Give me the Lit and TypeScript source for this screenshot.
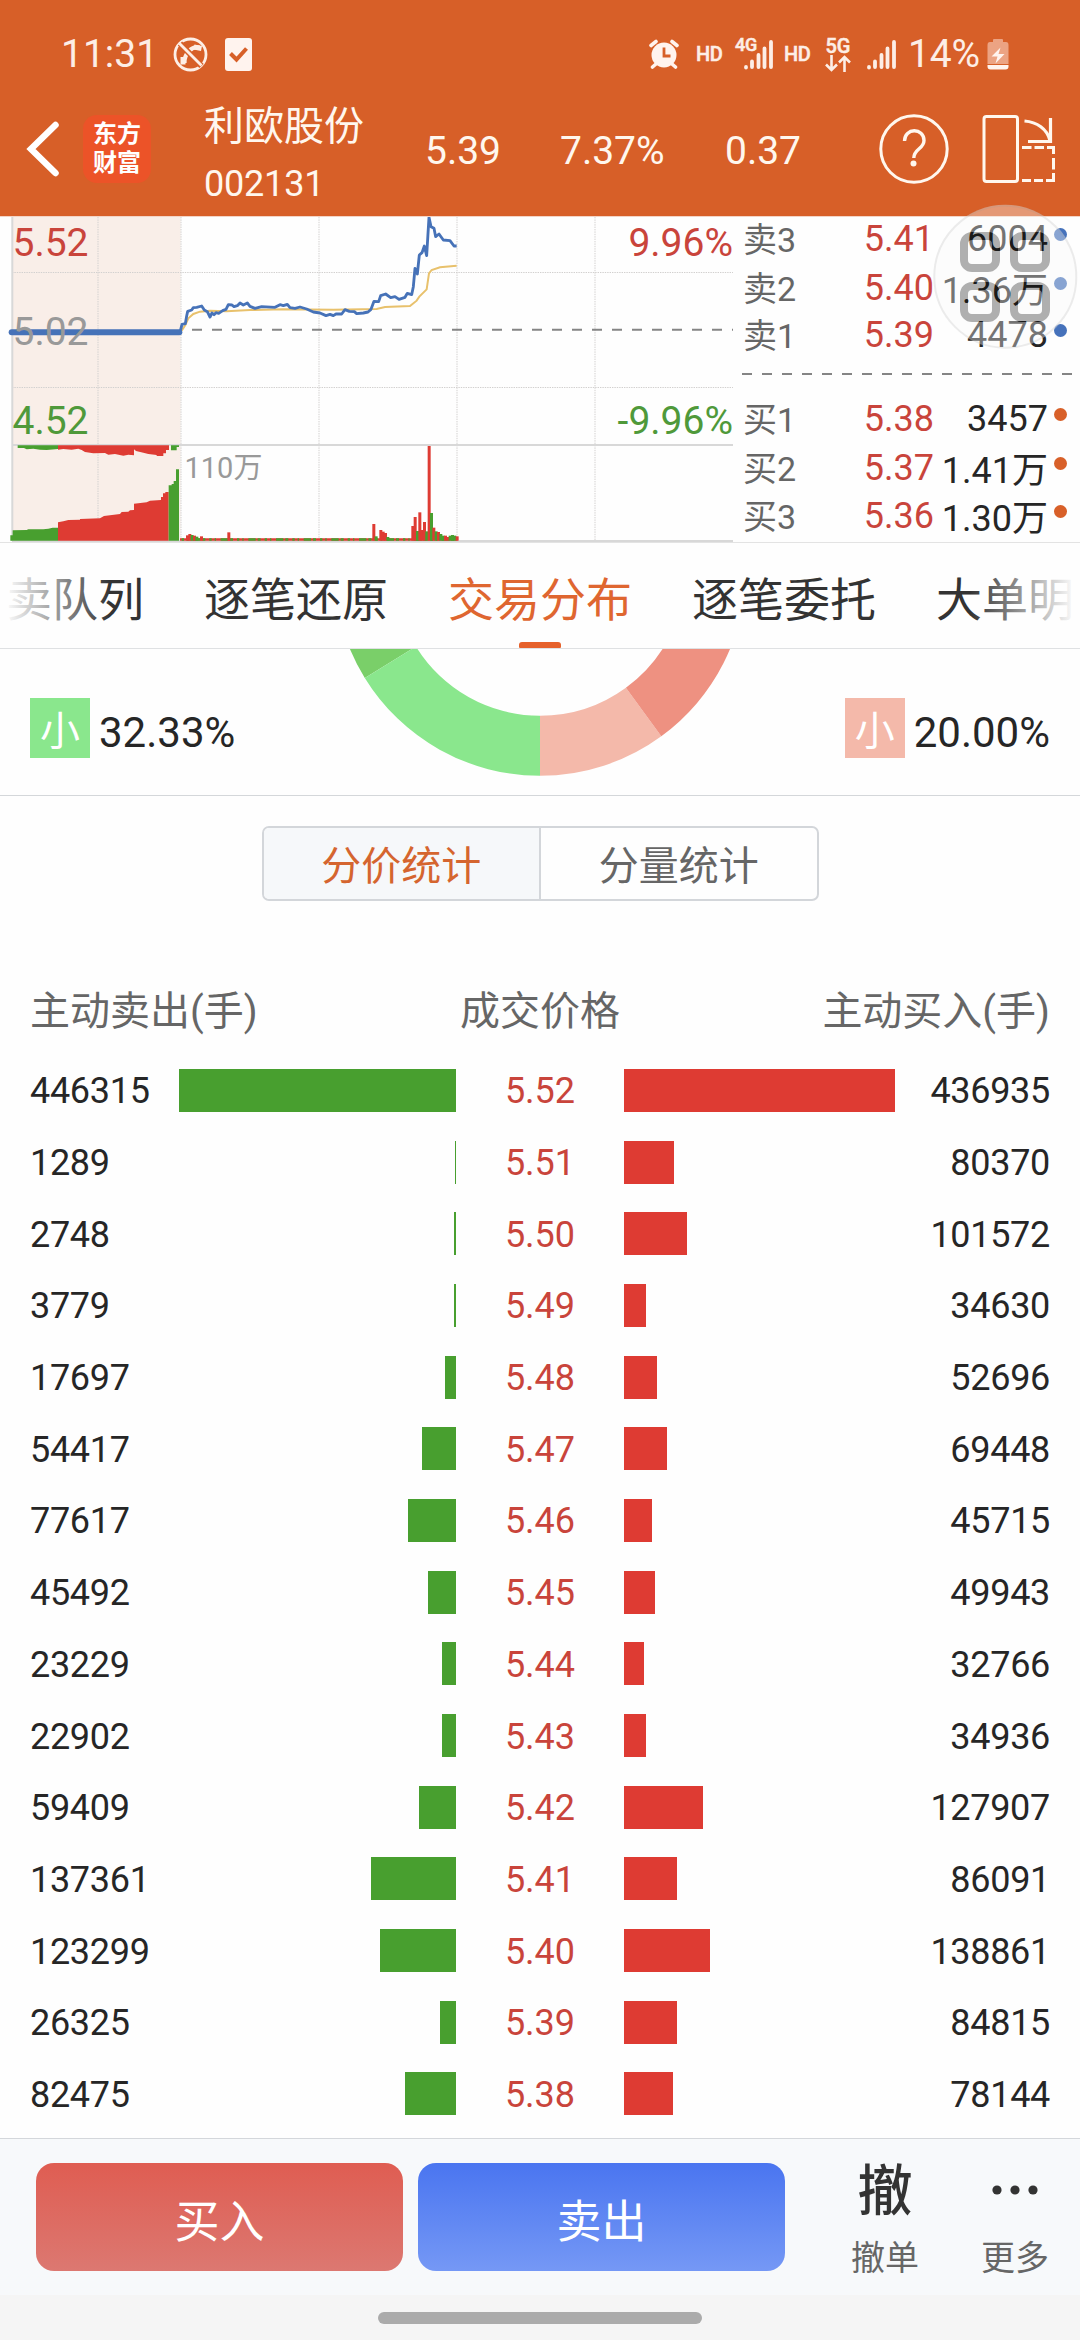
import { LitElement, html, svg, css } from "lit";
import { customElement } from "lit/decorators.js";
import { classMap } from "lit/directives/class-map.js";

type Level = { label: string; price: string; size: string; side: "ask" | "bid" };

const ASKS: Level[] = [
  { label: "卖3", price: "5.41", size: "6004", side: "ask" },
  { label: "卖2", price: "5.40", size: "1.36万", side: "ask" },
  { label: "卖1", price: "5.39", size: "4478", side: "ask" },
];
const BIDS: Level[] = [
  { label: "买1", price: "5.38", size: "3457", side: "bid" },
  { label: "买2", price: "5.37", size: "1.41万", side: "bid" },
  { label: "买3", price: "5.36", size: "1.30万", side: "bid" },
];
const TABS = ["买卖队列", "逐笔还原", "交易分布", "逐笔委托", "大单明细"];

// [active sell, price, active buy]
const ROWS: [number, string, number][] = [
  [446315, "5.52", 436935],
  [1289, "5.51", 80370],
  [2748, "5.50", 101572],
  [3779, "5.49", 34630],
  [17697, "5.48", 52696],
  [54417, "5.47", 69448],
  [77617, "5.46", 45715],
  [45492, "5.45", 49943],
  [23229, "5.44", 32766],
  [22902, "5.43", 34936],
  [59409, "5.42", 127907],
  [137361, "5.41", 86091],
  [123299, "5.40", 138861],
  [26325, "5.39", 84815],
  [82475, "5.38", 78144],
];
const MAX_VOLUME = 446315;
const MAX_BAR = 277;
const barWidth = (v: number) => Math.max(1, (v / MAX_VOLUME) * MAX_BAR).toFixed(1);

const PRICE_LINE =
  "540,367 546,343 556,341 560,318 563,304 575,300 580,293 590,292 605,288 613,300 622,305 630,321 636,309 642,314 648,308 656,310 668,302 678,298 685,284 696,285 702,290 712,287 720,279 730,285 742,279 750,289 765,295 785,290 825,292 840,284 850,287 862,283 870,293 885,295 900,291 920,297 940,306 960,309 978,317 990,313 1000,317 1008,312 1025,312 1035,299 1048,304 1063,305 1070,311 1090,309 1104,306 1113,298 1122,274 1136,275 1142,257 1157,252 1172,263 1185,260 1197,268 1215,262 1222,250 1235,254 1240,230 1245,175 1252,192 1258,135 1266,128 1273,108 1280,137 1287,22 1293,50 1302,55 1307,80 1317,72 1330,90 1350,92 1362,108 1370,108";
const AVERAGE_LINE =
  "545,362 556,345 565,325 580,312 600,305 630,302 680,304 750,300 850,298 1000,299 1130,297 1155,291 1230,288 1250,272 1258,260 1280,238 1287,190 1295,180 1320,172 1370,167";

// Volume spikes after the open: [x, top, rising]
const SPIKES: [number, number, boolean][] = [
  [558, 976, true], [565, 972, true], [572, 975, false], [579, 977, true], [586, 980, false],
  [600, 979, true], [682, 967, true], [1117, 942, true], [1124, 979, false], [1138, 960, true],
  [1145, 965, true], [1152, 969, true], [1159, 981, false], [1234, 948, true], [1241, 921, true],
  [1248, 963, false], [1255, 907, true], [1262, 960, true], [1269, 936, true], [1276, 964, false],
  [1283, 708, true], [1290, 909, false], [1297, 953, true], [1304, 964, false], [1311, 966, true],
  [1318, 972, false], [1325, 977, false], [1332, 977, true], [1339, 981, true], [1346, 977, false],
  [1353, 975, false], [1360, 977, false], [1367, 979, true],
];

@customElement("stock-chart")
export class StockChart extends LitElement {
  static styles = css`
    :host { display: block; flex: none; width: 736px; height: 325px; }
    svg { display: block; }
    text { font-family: Roboto, "Noto Sans CJK SC", sans-serif; font-size: 39px; }
    .up { fill: #c9443b; }
    .down { fill: #4f993a; }
    .flat { fill: #999; }
    .small { font-size: 29px; }
    .grid { stroke: #d2d0cf; stroke-width: 1; stroke-dasharray: 1.4 1; }
    .frame { stroke: #d8d8d8; stroke-width: 2; }
    .g { fill: #489f2f; }
    .r { fill: #de3b33; }
  `;
  render() {
    return html`<svg width="736" height="325" viewBox="0 217 736 325">
      <rect x="12" y="217" width="168.6" height="324" fill="#f9eee8"></rect>
      ${[98, 181, 319, 457, 595].map((x) => svg`<line class="grid" x1=${x} x2=${x} y1="217" y2="541"></line>`)}
      ${[272.5, 387.5].map((y) => svg`<line class="grid" x1="12" x2="733" y1=${y} y2=${y}></line>`)}
      <path class="frame" d="M12.3 217V541M12 445H733M12 541H733"></path>
      <path d="M192 329.8H733" stroke="#858585" stroke-width="2" stroke-dasharray="10 10"></path>
      <g transform="translate(0 210) scale(.33333)">
        <path class="g" d="M31 992V976H38V961L80 960 85 958H130L145 956 158 953H174V992Z"></path>
        <path class="r" d="M174 992V937L190 934 205 930 240 929V927L300 925 312 918 330 916 360 912 365 906 385 905 390 901 402 900V881L440 877 450 872 483 870V861H489V850H496V846H506V992Z"></path>
        <path class="g" d="M506 992V826H515V822H521V813H528V778H537V992Z"></path>
        <path class="g" d="M53 706H174V717L140 720 120 719 100 716 80 718 72 714H53Z"></path>
        <path class="r" d="M174 706H507V720H498V730H490V738H470V735L445 732 430 728 408 723 402 718V736L385 734 370 737 345 732 325 734 315 729 280 730 255 726 245 720 235 716 215 719 190 717 174 719Z"></path>
        <path class="g" d="M513 706H537V711H530V721H513Z"></path>
        <path d="M540 988.500H1373" stroke="#de3b33" stroke-width="8"></path>
        <path d="M545 988.500H1373" stroke="#489f2f" stroke-width="8" stroke-dasharray="7 9 4 14 22 6 9 12"></path>
        ${SPIKES.map(([x, y, up]) => svg`<rect class=${up ? "r" : "g"} x=${x} y=${y} width="9" height=${992 - y}></rect>`)}
        <polyline points=${AVERAGE_LINE} fill="none" stroke="#e8c16c" stroke-width="6"></polyline>
        <path d="M35 367H538" stroke="#4672b8" stroke-width="18" stroke-linecap="round"></path>
        <polyline points=${PRICE_LINE} fill="none" stroke="#4672b8" stroke-width="8.500" stroke-linejoin="round"></polyline>
      </g>
      <text class="up" x="12.500" y="256">5.52</text>
      <text class="flat" x="12.500" y="345">5.02</text>
      <text class="down" x="12.500" y="434">4.52</text>
      <text class="up" x="733" y="256" text-anchor="end">9.96%</text>
      <text class="down" x="733" y="434" text-anchor="end">-9.96%</text>
      <text class="flat small" x="184.500" y="478">110万</text>
    </svg>`;
  }
}

@customElement("order-book")
export class OrderBook extends LitElement {
  static styles = css`
    :host { display: block; flex: 1; min-width: 0; padding-left: 6px; font-size: 36px; }
    .row { display: grid; grid-template-columns: 62px 130px 1fr 13px; height: 48px; line-height: 48px; align-items: center; }
    .label { color: #666; font-size: 34px; padding: 2px 0 0 1px; }
    .price { color: #c9443b; text-align: right; }
    .size { color: #262626; text-align: right; padding-right: 6px; white-space: nowrap; }
    .size.wan { padding-top: 5px; }
    .dot { width: 13px; height: 13px; border-radius: 50%; background: #d86029; margin-top: -9px; }
    .dot.ask { background: #4672bb; }
    .book { padding: 0 13px 0 0; margin-top: -3.500px; }
    .sep { display: block; margin: 13.500px 0 16.500px; }
  `;
  private row(l: Level) {
    return html`<div class="row">
      <span class="label">${l.label}</span>
      <span class="price">${l.price}</span>
      <span class=${classMap({ size: true, wan: l.size.endsWith("万") })}>${l.size}</span>
      <i class=${classMap({ dot: true, ask: l.side === "ask" })}></i>
    </div>`;
  }
  render() {
    return html`<div class="book">
      ${ASKS.map((l) => this.row(l))}
      <svg class="sep" width="330" height="6"><path d="M0 3H330" stroke="#858585" stroke-width="2" stroke-dasharray="10 10"></path></svg>
      ${BIDS.map((l) => this.row(l))}
    </div>`;
  }
}

const signal = svg`<path d="M2 28V28.500M8 22.500V28M14.500 16V28M20.500 9.500V28M27 3V28" stroke="#fdeee6" stroke-width="3.800" stroke-linecap="round"/>`;

@customElement("app-root")
export class AppRoot extends LitElement {
  static styles = css`
    :host {
      display: block; position: relative; width: 1080px; height: 2340px; overflow: hidden;
      background: #fefefe; color: #262626;
      font-family: Roboto, "Noto Sans CJK SC", sans-serif;
    }
    svg { display: block; flex: none; }
    .header { height: 216px; background: #d75f28; border-bottom: 1px solid #f3d4c6; color: #fff7ee; }
    .status { display: flex; align-items: center; height: 108px; padding: 0 71px 0 61px; box-sizing: border-box; color: #fdeee6; font-size: 39px; line-height: 44px; }
    .time { width: 112px; }
    .task { margin-left: 17px; }
    .grow { flex: 1; }
    .hd, .net4 span, .net5 { -webkit-text-stroke: .5px #fdeee6; }
    .hd { font-size: 20px; font-weight: 500; line-height: 24px; letter-spacing: -.3px; width: 28px; }
    .hd.first { margin-left: 17px; }
    .net4 { display: grid; width: 38px; margin: 0 11px; }
    .net4 > * { grid-area: 1 / 1; }
    .net4 span { font-size: 18px; font-weight: 500; line-height: 18px; margin-top: -2px; }
    .net4 svg { justify-self: end; }
    .net5 { width: 26px; margin: 0 16px 0 13px; font-size: 20px; font-weight: 500; line-height: 18px; text-align: center; }
    .pct { margin: 0 7px 0 12px; letter-spacing: -.1px; }
    .title { display: flex; align-items: center; height: 108px; font-size: 39px; margin-top: -13px; }
    .back { margin-left: 26px; }
    .logo { width: 68px; height: 68px; margin-left: 24px; padding-top: 5px; box-sizing: border-box; border-radius: 14px; background: #ec5328; color: #fff; font-size: 24px; font-weight: 700; line-height: 29px; text-align: center; }
    .stock { width: 221px; margin: 12px 0 0 53px; }
    .name { font-size: 40px; line-height: 58px; }
    .code { font-size: 36px; line-height: 56px; letter-spacing: -.2px; }
    .last, .rate, .diff { padding-top: 3px; }
    .last { width: 135px; }
    .rate { width: 165px; }
    .diff { width: 154px; }
    .rotate { margin-left: 33px; }
    .market { display: flex; height: 325px; border-bottom: 1px solid #e3e3e3; }
    .tabs { position: relative; display: flex; justify-content: center; gap: 60px; height: 106px; box-sizing: border-box; border-bottom: 1px solid #dfe1e3; overflow: hidden; }
    .tab { display: flex; flex-direction: column; flex: none; align-items: center; width: 184px; font-size: 46px; line-height: 115px; height: 105px; color: #333; white-space: nowrap; }
    .tab span { height: 99px; }
    .tab.on { color: #df6630; }
    .tab i { width: 42px; height: 6px; border-radius: 3px 3px 1px 1px; background: #e6612b; }
    .fade { position: absolute; top: 0; width: 110px; height: 104px; }
    .fade.l { left: 0; background: linear-gradient(90deg, #fefefe 4%, #fefefe00); }
    .fade.r { right: 0; background: linear-gradient(270deg, #fefefe 4%, #fefefe00); }
    .donut { display: flex; justify-content: space-between; height: 146px; border-bottom: 1px solid #d4d7da; padding: 0 30px; }
    .legend { display: flex; align-items: center; gap: 9px; height: 60px; margin-top: 49px; font-size: 42px; line-height: 60px; }
    .legend span { padding-top: 9px; }
    .legend b { width: 60px; height: 60px; box-sizing: border-box; padding-top: 4px; font-size: 40px; font-weight: 400; text-align: center; color: #fff; }
    .sell b { background: #8ae78d; }
    .buy b { background: #f4b9aa; }
    .switch { display: flex; width: 557px; height: 75px; margin: 30px auto 0; box-sizing: border-box; border: 2px solid #d3d6da; border-radius: 7px; overflow: hidden; font-size: 40px; line-height: 78px; text-align: center; color: #666; }
    .switch span { flex: 1; }
    .switch .on { background: #f6f8fa; color: #d5652f; border-right: 2px solid #d3d6da; }
    .thead, .row { display: grid; grid-template-columns: 426px 168px 426px; padding: 0 30px; align-items: center; }
    .thead { margin-top: 81px; height: 58px; line-height: 60px; font-size: 40px; color: #666; }
    .thead :nth-child(2), .price { text-align: center; }
    .thead :nth-child(3) { text-align: right; }
    .body { padding-top: 14.500px; }
    .row { height: 71.700px; font-size: 36px; line-height: 44px; letter-spacing: -.3px; }
    .row span { padding-top: 2px; }
    .cell { display: flex; align-items: center; justify-content: space-between; }
    .bar { height: 43px; }
    .bar.s { background: #489f2f; }
    .bar.b { background: #de3b33; }
    .price { color: #c9443b; letter-spacing: 0; }
    .actions { position: absolute; left: 0; right: 0; top: 2138px; height: 157px; box-sizing: border-box; border-top: 1px solid #d4d7db; background: #f7f9fb; display: flex; padding: 24px 0 0 36px; }
    .btn { width: 367px; height: 108px; border-radius: 18px; color: #fff; font-size: 45px; line-height: 120px; text-align: center; margin-right: 15px; }
    .btn.buy { background: linear-gradient(#df5d52, #dc7871); }
    .btn.sell { background: linear-gradient(#4a75f0, #7598f5); }
    .tool { width: 130px; text-align: center; font-size: 34px; color: #666; }
    .tool.cancel { margin-left: 20px; }
    .tool b { display: block; height: 54px; font-size: 55px; line-height: 57px; font-weight: 500; color: #333; }
    .tool span { display: block; line-height: 34px; margin-top: 24px; }
    .tool svg { margin: 0 auto; }
    .nav { position: absolute; left: 0; right: 0; top: 2295px; height: 45px; background: #f5f5f5; }
    .nav i { display: block; width: 324px; height: 12px; margin: 17px auto 0; border-radius: 6px; background: #ababab; }
    .assist { position: absolute; left: 932px; top: 204px; }
  `;

  private status() {
    return html`<div class="status">
      <span class="time">11:31</span>
      <svg width="35" height="35" viewBox="0 0 35 35" fill="none" stroke="#fdeee6">
        <circle cx="17.500" cy="17.500" r="15.500" stroke-width="2.800"></circle>
        <path d="M26.500 10.500C19 8.500 11 17 11.500 26" stroke-width="4.200"></path>
        <path d="M21 10l7.500 1.500M10 20v7.500" stroke-width="5"></path>
        <path d="M7 6.500L28.500 29" stroke="#d75f28" stroke-width="6"></path>
        <path d="M6.500 6.500L28.500 28.500" stroke-width="2.800"></path>
      </svg>
      <svg class="task" width="27" height="33" viewBox="0 0 27 33"><rect width="27" height="33" rx="3" fill="#fff3ee"></rect><path d="M5.500 15.500L11.500 21.500L21.500 10.500" fill="none" stroke="#d75f28" stroke-width="4"></path></svg>
      <span class="grow"></span>
      <svg width="30" height="30" viewBox="0 0 30 30">
        <circle cx="15" cy="16" r="12.500" fill="#fff3ee"></circle>
        <path d="M2 6.500L7 2.500M28 6.500L23 2.500M7 25L3.500 28M23 25L26.500 28" stroke="#fff3ee" stroke-width="3.600" stroke-linecap="round"></path>
        <path d="M15 8.500V17H21.500" fill="none" stroke="#d75f28" stroke-width="2.800"></path>
      </svg>
      <span class="hd first">HD</span>
      <span class="net4"><span>4G</span><svg width="29" height="33" viewBox="0 0 29 31">${signal}</svg></span>
      <span class="hd">HD</span>
      <span class="net5">5G<svg width="26" height="17" viewBox="0 0 26 17"><path d="M6.500 0V15M1 9.500L6.500 15L12 9.500M19.500 17V2M14 7.500L19.500 2L25 7.500" fill="none" stroke="#fdeee6" stroke-width="2.600"></path></svg></span>
      <svg width="29" height="33" viewBox="0 0 29 31">${signal}</svg>
      <span class="pct">14%</span>
      <svg width="22" height="32" viewBox="0 0 22 32"><path d="M6 4V2Q6 1 7 1H15Q16 1 16 2V4H19Q21.500 4 21.500 7V26H.5V7Q.5 4 3 4Z" fill="#eca383"></path><path d="M.5 27H21.500V28.500Q21.500 31.500 18.500 31.500H3.500Q.5 31.500 .5 28.500Z" fill="#fff3ee"></path><path d="M13.500 9.500L4.500 18.500H10.500L8.500 25.500L17.500 16H11.500Z" fill="#fff3ee"></path></svg>
    </div>`;
  }

  private titleBar() {
    return html`<div class="title">
      <svg class="back" width="33" height="56" viewBox="0 0 33 56"><path d="M29.500 4L5 28L29.500 52" fill="none" stroke="#fff" stroke-width="6.500" stroke-linecap="round"></path></svg>
      <div class="logo">东方<br />财富</div>
      <div class="stock"><div class="name">利欧股份</div><div class="code">002131</div></div>
      <span class="last">5.39</span><span class="rate">7.37%</span><span class="diff">0.37</span>
      <svg width="70" height="72" viewBox="0 0 70 72" fill="none" stroke="#fff7ee"><circle cx="35" cy="36" r="33.200" stroke-width="3"></circle><path d="M25.500 28C25.500 14.500 45 14.500 45 27.500C45 36 34.800 35.500 34.800 45" stroke-width="3.400"></path><circle cx="34.500" cy="50.500" r="3" fill="#fff7ee" stroke="none"></circle></svg>
      <svg class="rotate" width="74" height="68" viewBox="0 0 74 68" fill="none" stroke="#fff7ee" stroke-width="3">
        <rect x="2" y="1.500" width="33.500" height="65" rx="2.500"></rect>
        <path d="M42.500 6C55 7 65 14 68 25.500M68.500 3V26.500H46" stroke-width="3.200"></path>
        <path d="M40 32.500H49.500M52.500 32.500H62M65 32.500H71.500V39M71.500 43V54.500M71.500 58V65.500H64M61 65.500H52M49 65.500H40"></path>
      </svg>
    </div>`;
  }

  private donut() {
    return html`<section class="donut">
      <div class="legend sell"><b>小</b><span>32.33%</span></div>
      <svg width="420" height="146" viewBox="330 649 420 146">
        <path fill="#7acf69" d="M334.200 570A205.800 205.800 0 0 0 364.800 677.900L415.900 646.500A145.800 145.800 0 0 1 394.200 570Z"></path>
        <path fill="#8ae78d" d="M364.800 677.900A205.800 205.800 0 0 0 540 775.800V715.800A145.800 145.800 0 0 1 415.900 646.500Z"></path>
        <path fill="#f4b9aa" d="M540 775.800A205.800 205.800 0 0 0 661.300 736.200L625.900 687.800A145.800 145.800 0 0 1 540 715.800Z"></path>
        <path fill="#ee9181" d="M661.300 736.200A205.800 205.800 0 0 0 745.800 570H685.800A145.800 145.800 0 0 1 625.900 687.800Z"></path>
      </svg>
      <div class="legend buy"><b>小</b><span>20.00%</span></div>
    </section>`;
  }

  render() {
    return html`
      <header class="header">${this.status()}${this.titleBar()}</header>
      <section class="market"><stock-chart></stock-chart><order-book></order-book></section>
      <nav class="tabs">
        ${TABS.map((t, i) => html`<div class=${classMap({ tab: true, on: i === 2 })}><span>${t}</span>${i === 2 ? html`<i></i>` : ""}</div>`)}
        <div class="fade l"></div><div class="fade r"></div>
      </nav>
      ${this.donut()}
      <div class="switch"><span class="on">分价统计</span><span>分量统计</span></div>
      <div class="thead"><span>主动卖出(手)</span><span>成交价格</span><span>主动买入(手)</span></div>
      <div class="body">
        ${ROWS.map(
          ([sell, price, buy]) => html`<div class="row">
            <div class="cell"><span>${sell}</span><div class="bar s" style="width:${barWidth(sell)}px"></div></div>
            <span class="price">${price}</span>
            <div class="cell"><div class="bar b" style="width:${barWidth(buy)}px"></div><span>${buy}</span></div>
          </div>`
        )}
      </div>
      <footer class="actions">
        <div class="btn buy">买入</div><div class="btn sell">卖出</div>
        <div class="tool cancel"><b>撤</b><span>撤单</span></div>
        <div class="tool"><b><svg width="50" height="54"><g fill="#333"><circle cx="7" cy="27" r="4.600"></circle><circle cx="25" cy="27" r="4.600"></circle><circle cx="43" cy="27" r="4.600"></circle></g></svg></b><span>更多</span></div>
      </footer>
      <div class="nav"><i></i></div>
      <svg class="assist" width="146" height="146" viewBox="932 204 146 146">
        <defs><mask id="cut"><rect x="932" y="204" width="146" height="146" fill="#fff"></rect><g fill="none" stroke="#000" stroke-width="8">${this.keys()}</g></mask></defs>
        <circle cx="1005.300" cy="276.700" r="72" fill="#fafafa" fill-opacity=".37" mask="url(#cut)"></circle>
        <circle cx="1005.300" cy="276.700" r="71" fill="none" stroke="#999" stroke-opacity=".17" stroke-width="2"></circle>
        <g fill="none" stroke="#000" stroke-opacity=".31" stroke-width="8">${this.keys()}</g>
      </svg>
    `;
  }

  private keys() {
    return [[964, 236], [1014, 236], [964, 286], [1014, 286]].map(
      ([x, y]) => svg`<rect x=${x} y=${y} width="32" height="32" rx="8"></rect>`
    );
  }
}
